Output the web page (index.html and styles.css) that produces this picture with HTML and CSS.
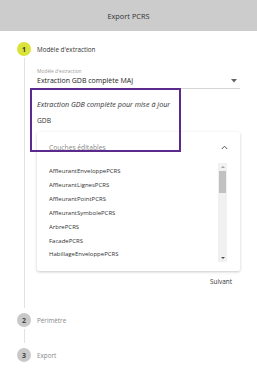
FILE: index.html
```html
<!DOCTYPE html>
<html lang="fr">
<head>
  <meta charset="UTF-8">
  <title>Export PCRS</title>
  <link rel="stylesheet" href="styles.css">
</head>
<body>
  <div class="header">Export PCRS</div>

  <div class="stepper">
    <div class="step-head">
      <span class="step-num active">1</span>
      <span class="step-label active">Modèle d'extraction</span>
    </div>
    <div class="step-body">
      <div class="field">
        <div class="field-label">Modèle d'extraction</div>
        <div class="field-value">
          <span>Extraction GDB complète MAJ</span>
          <svg width="6" height="4" viewBox="0 0 6 4"><polygon points="0,0 6,0 3,3.5" fill="#666"/></svg>
        </div>
      </div>

      <div class="desc">Extraction GDB complète pour mise à jour</div>
      <div class="format">GDB</div>

      <div class="card">
        <div class="card-head">
          <span>Couches éditables</span>
          <svg width="7" height="5" viewBox="0 0 7 5"><polyline points="0.8,4 3.5,1.2 6.2,4" fill="none" stroke="#555" stroke-width="1"/></svg>
        </div>
        <div class="list-wrap">
          <ul class="layers">
            <li>AffleurantEnveloppePCRS</li>
            <li>AffleurantLignesPCRS</li>
            <li>AffleurantPointPCRS</li>
            <li>AffleurantSymbolePCRS</li>
            <li>ArbrePCRS</li>
            <li>FacadePCRS</li>
            <li>HabillageEnveloppePCRS</li>
          </ul>
          <div class="scrollbar">
            <span class="arrow up"></span>
            <span class="thumb"></span>
            <span class="arrow down"></span>
          </div>
        </div>
      </div>

      <div class="actions"><span class="btn">Suivant</span></div>

      <div class="highlight"></div>
    </div>

    <div class="step-head">
      <span class="step-num">2</span>
      <span class="step-label">Périmètre</span>
    </div>
    <div class="connector"></div>
    <div class="step-head">
      <span class="step-num">3</span>
      <span class="step-label">Export</span>
    </div>
  </div>
</body>
</html>
```

FILE: styles.css
```css
body {
  margin: 0;
  font-family: "Open Sans", "DejaVu Sans", sans-serif;
  color: #333;
  background-color: #ffffff;
}
.header {
  height: 31px;
  background-color: #cccccc;
  display: flex;
  align-items: center;
  justify-content: center;
  font-size: 7.4px;
  color: #333;
}
.stepper {
  padding: 11px 17px 0 17px;
}
.step-head {
  display: flex;
  align-items: center;
  height: 14px;
}
.step-num {
  width: 14px;
  height: 14px;
  border-radius: 50%;
  background-color: #c9c9c9;
  color: #444;
  font-size: 7px;
  font-weight: bold;
  display: flex;
  align-items: center;
  justify-content: center;
}
.step-num.active {
  background-color: #dbe33b;
  color: #333;
}
.step-label {
  margin-left: 6px;
  font-size: 6.3px;
  color: #888;
}
.step-label.active {
  color: #333;
}
.step-body {
  position: relative;
  margin: 2px 0 5px 7px;
  border-left: 1px solid #e2e2e2;
  padding: 9px 0 22px 12px;
}
.connector {
  margin: 2px 0 5px 7px;
  height: 14px;
  border-left: 1px solid #e2e2e2;
}
.field {
  border-bottom: 1px solid #d6d6d6;
  padding-bottom: 2px;
}
.field-label {
  font-size: 4.8px;
  color: #999;
  line-height: 8px;
}
.field-value {
  display: flex;
  align-items: center;
  justify-content: space-between;
  font-size: 7px;
  line-height: 11px;
  padding-right: 3px;
  color: #222;
}
.desc {
  margin-top: 10px;
  font-size: 7.2px;
  font-style: italic;
  line-height: 11px;
  color: #333;
}
.format {
  margin-top: 5px;
  font-size: 6.7px;
  line-height: 11px;
  color: #333;
}
.card {
  margin-top: 6px;
  box-shadow: 0 1px 3px rgba(0, 0, 0, 0.22);
  border-radius: 2px;
  padding: 0 11px 9px 12px;
}
.card-head {
  height: 31px;
  display: flex;
  align-items: center;
  justify-content: space-between;
  font-size: 6.7px;
  color: #888;
  padding-right: 1px;
}
.list-wrap {
  display: flex;
  height: 99px;
}
.layers {
  flex: 1;
  list-style: none;
  margin: 0;
  padding: 2px 0 0 0;
  overflow: hidden;
}
.layers li {
  font-size: 6px;
  line-height: 13.9px;
  color: #333;
}
.scrollbar {
  width: 9px;
  margin-right: 2px;
  background-color: #f1f1f1;
  display: flex;
  flex-direction: column;
  align-items: center;
}
.thumb {
  width: 7px;
  height: 22px;
  background-color: #c1c1c1;
}
.arrow {
  width: 0;
  height: 0;
  border-left: 2px solid transparent;
  border-right: 2px solid transparent;
  margin: 3px 0;
}
.arrow.up {
  border-bottom: 2px solid #a3a3a3;
}
.arrow.down {
  border-top: 2px solid #505050;
  margin-top: auto;
}
.actions {
  display: flex;
  justify-content: flex-end;
  margin-top: 6px;
  padding-right: 8px;
}
.btn {
  font-size: 6.4px;
  color: #333;
}
.highlight {
  position: absolute;
  left: 5px;
  top: 30px;
  width: 147px;
  height: 60px;
  border: 2.5px solid #5b2a8c;
}
```
